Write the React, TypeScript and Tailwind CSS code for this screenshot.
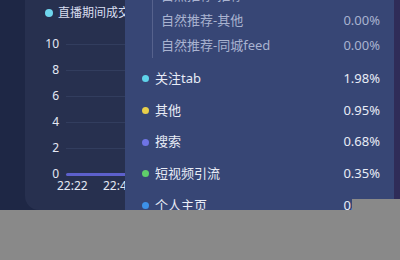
import React from "react";

const Y_TICKS = ["10", "8", "6", "4", "2", "0"];

const SUB_ROWS = [
  { name: "自然推荐-推荐feed", value: "0.00%" },
  { name: "自然推荐-其他", value: "0.00%" },
  { name: "自然推荐-同城feed", value: "0.00%" },
];

const MAIN_ROWS = [
  { name: "关注tab", value: "1.98%", dot: "bg-[#5fd3ea]" },
  { name: "其他", value: "0.95%", dot: "bg-[#e8cf4a]" },
  { name: "搜索", value: "0.68%", dot: "bg-[#6f74e4]" },
  { name: "短视频引流", value: "0.35%", dot: "bg-[#5fcf6a]" },
  { name: "个人主页", value: "0.21%", dot: "bg-[#3d91e8]" },
];

function Chart() {
  return (
    <div className="ml-[25px] h-[210px] w-[375px] rounded-bl-[14px] bg-[#27304f]">
      {/* legend */}
      <div className="flex h-[25px] items-center pl-[20px] pt-[1px]">
        <span className="h-[8px] w-[8px] rounded-full bg-[#6fd6ee]" />
        <span className="ml-[5px] text-[12px] text-[#d9def0]">直播期间成交</span>
      </div>
      {/* plot */}
      <div className="mt-[6px] flex flex-col">
        {Y_TICKS.map((t) => (
          <div key={t} className="flex h-[26px] items-center">
            <span className="w-[34px] text-right text-[12px] text-[#e4e8f4]">{t}</span>
            <div
              className={
                t === "0"
                  ? "ml-[7px] h-[3px] flex-1 rounded-full bg-[#5d60cb]"
                  : "ml-[7px] h-px flex-1 bg-[#323d5e]"
              }
            />
          </div>
        ))}
        <div className="-mt-[8px] flex pl-[32px] text-[12px] leading-[14px] text-[#e4e8f4]">
          <span className="w-[46px]">22:22</span>
          <span>22:44</span>
        </div>
      </div>
    </div>
  );
}

function Tooltip() {
  return (
    <div className="absolute left-[125px] top-[-18px] h-[300px] w-[269px] bg-[#374675] text-[13px]">
      <div className="ml-[27px] mt-[1px] border-l border-[#56628d] pl-[8px]">
        {SUB_ROWS.map((r) => (
          <div key={r.name} className="flex h-[25px] items-center justify-between pr-[14px] text-[#a9b3d0]">
            <span>{r.name}</span>
            <span>{r.value}</span>
          </div>
        ))}
      </div>
      <div className="mt-[5px] flex flex-col">
        {MAIN_ROWS.map((r) => (
          <div key={r.name} className="flex h-[31.7px] items-center pl-[17px] pr-[14px] text-[#e8ecf6]">
            <span className={`h-[7px] w-[7px] rounded-full ${r.dot}`} />
            <span className="ml-[6px] flex-1">{r.name}</span>
            <span>{r.value}</span>
          </div>
        ))}
      </div>
    </div>
  );
}

export default function App() {
  return (
    <div
      className="relative h-[260px] w-[400px] overflow-hidden bg-[#1e2745]"
      style={{ fontFamily: '"Noto Sans", "Noto Sans CJK SC", sans-serif' }}
    >
      <Chart />
      <div className="absolute right-0 top-0 h-[210px] w-[6px] bg-[#2f2c58]" />
      <Tooltip />
      {/* grey cover */}
      <div className="absolute left-[352px] top-[199px] h-[61px] w-[48px] bg-[#898989]" />
      <div className="absolute left-0 top-[210px] h-[50px] w-[400px] bg-[#898989]" />
    </div>
  );
}
